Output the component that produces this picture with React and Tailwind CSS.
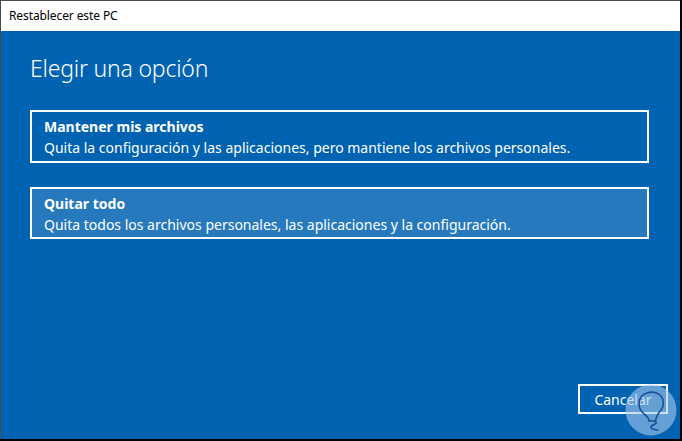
export default function App() {
  const font = { fontFamily: '"Noto Sans", "Open Sans", sans-serif' };
  return (
    <div className="w-[682px] h-[441px] bg-black overflow-hidden" style={font}>
      <div className="relative flex flex-col w-[680px] h-[439px] border-l border-t border-[#4a4a4a] bg-[#0063b1]">
        <div className="h-[30px] bg-white flex items-center pl-[8px] text-[12px] tracking-[-0.1px] text-black">
          Restablecer este PC
        </div>
        <div className="flex-1 flex flex-col pl-[29px] pr-[31px]">
          <div className="mt-[21px] text-[23px] font-light text-white leading-[32px] tracking-[-0.2px]">
            Elegir una opción
          </div>
          <div className="mt-[26px] border-2 border-white px-[12px] pt-[4px] pb-[3px] text-white">
            <div className="text-[14px] font-bold leading-[21px]">Mantener mis archivos</div>
            <div className="text-[14px] leading-[21px]">
              Quita la configuración y las aplicaciones, pero mantiene los archivos personales.
            </div>
          </div>
          <div className="mt-[24px] border-2 border-white bg-[#2779bd] px-[12px] pt-[4px] pb-[2px] text-white">
            <div className="text-[14px] font-bold leading-[21px]">Quitar todo</div>
            <div className="text-[14px] leading-[21px]">
              Quita todos los archivos personales, las aplicaciones y la configuración.
            </div>
          </div>
          <div className="flex-1" />
          <div className="flex justify-end mb-[25px] -mr-[19px]">
            <div className="w-[90px] h-[30px] border-2 border-white flex items-center justify-center text-white text-[14px]">
              Cancelar
            </div>
          </div>
        </div>
        <svg className="absolute left-[624px] top-[383px]" width="52" height="52" viewBox="0 0 52 52">
          <circle cx="26" cy="26" r="25.5" fill="#a6c8ec" fillOpacity="0.6" />
          <path
            d="M19 30 C12 24 12 12 22 9 C32 6 40 12 38 22 C37 27 33 28 32 32 C31 35 31 36 30 37 M19 30 C22 32 24 34 24 37 C28 36 34 38 30 40 C26 42 24 43 28 45 C31 46 32 46 33 46"
            fill="none"
            stroke="#1d4f96"
            strokeWidth="1.6"
            strokeLinecap="round"
          />
        </svg>
      </div>
    </div>
  );
}
